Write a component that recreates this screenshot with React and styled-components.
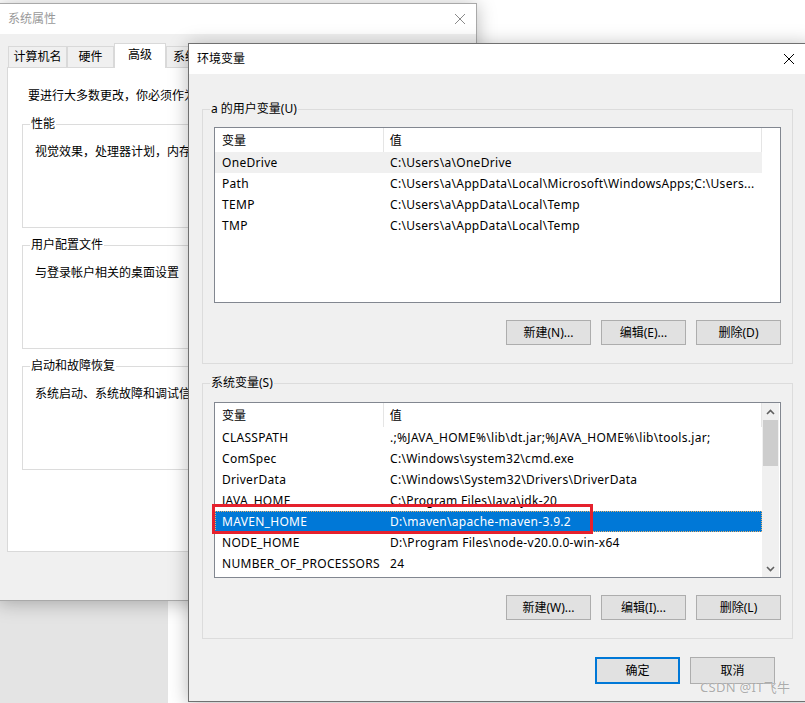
import React from 'react'
import styled, { createGlobalStyle } from 'styled-components'

const GlobalStyle = createGlobalStyle`
  html, body {
    margin: 0;
    padding: 0;
    background: #fff;
  }
  body {
    font-family: "Noto Sans", "Noto Sans CJK SC", sans-serif;
    font-size: 12px;
    color: #000;
    overflow: hidden;
  }
`

// 桌面（ウィンドウを自由に置くキャンバス）
const Desktop = styled.div`
  position: relative;
  width: 805px;
  height: 703px;
  overflow: hidden;
  background: #fff;
`

const BackWindow = styled.div`
  position: absolute;
  left: 0;
  top: 540px;
  width: 168px;
  height: 200px;
  background: #e4e4e4;
`

const Window = styled.div`
  position: absolute;
  left: ${p => p.$x}px;
  top: ${p => p.$y}px;
  width: ${p => p.$w}px;
  height: ${p => p.$h}px;
  box-sizing: border-box;
  border: 1px solid ${p => (p.$active ? '#707070' : '#a9a9a9')};
  background: #f0f0f0;
  box-shadow: 0 2px 18px rgba(0, 0, 0, 0.28);
  display: flex;
  flex-direction: column;
`

const TitleBar = styled.div`
  flex: none;
  height: 30px;
  background: #fff;
  display: flex;
  align-items: center;
  justify-content: space-between;
  padding-left: ${p => p.$pad}px;
  color: ${p => (p.$active ? '#000' : '#999')};
  line-height: 16px;
`

const CloseButton = styled.div`
  width: ${p => p.$w}px;
  height: 30px;
  display: flex;
  align-items: center;
  justify-content: center;
`

// ---- 系统属性 ----
const SysBody = styled.div`
  flex: 1;
  display: flex;
  flex-direction: column;
  padding: 9px 8px 48px 8px;
`

const TabStrip = styled.div`
  display: flex;
  align-items: flex-end;
  height: 24px;
  margin-left: 1px;
`

const Tab = styled.div`
  width: ${p => p.$w}px;
  height: ${p => (p.$selected ? 25 : 21)}px;
  box-sizing: border-box;
  border: 1px solid #d9d9d9;
  border-bottom: none;
  background: ${p => (p.$selected ? '#fff' : '#f0f0f0')};
  margin-bottom: ${p => (p.$selected ? -1 : 0)}px;
  position: relative;
  z-index: ${p => (p.$selected ? 1 : 0)};
  display: flex;
  align-items: center;
  justify-content: center;
  line-height: 16px;
  padding-bottom: ${p => (p.$selected ? 3 : 0)}px;
  white-space: nowrap;
  overflow: hidden;
`

const TabPanel = styled.div`
  flex: 1;
  border: 1px solid #d9d9d9;
  background: #fff;
  padding: 20px 0 0 14px;
  line-height: 16px;
  white-space: nowrap;
  overflow: hidden;
`

const Intro = styled.div`
  padding-left: 6px;
`

const SysGroup = styled.div`
  position: relative;
  width: 420px;
  height: 104px;
  box-sizing: border-box;
  border: 1px solid #dcdcdc;
  margin-top: ${p => p.$top}px;
  padding: 19px 0 0 12px;
`

const GroupLabel = styled.span`
  position: absolute;
  left: 7px;
  top: -9px;
  padding: 0 1px;
  line-height: 16px;
  background: ${p => p.$bg};
  white-space: nowrap;
`

// ---- 环境变量 ----
const EnvBody = styled.div`
  flex: 1;
  display: flex;
  flex-direction: column;
  padding: 35px 0 0 13px;
`

const EnvGroup = styled.div`
  position: relative;
  width: 591px;
  box-sizing: border-box;
  border: 1px solid #dcdcdc;
  margin-top: ${p => p.$top}px;
  padding: ${p => p.$padTop}px 11px 18px 11px;
  display: flex;
  flex-direction: column;
`

const ListBox = styled.div`
  width: 567px;
  height: 176px;
  box-sizing: border-box;
  border: 1px solid #828790;
  background: #fff;
  display: flex;
  overflow: hidden;
`

const ListMain = styled.div`
  width: 547px;
  flex: none;
  display: flex;
  flex-direction: column;
`

const HeaderRow = styled.div`
  display: flex;
  height: 24px;
  flex: none;
`

const HeaderCell = styled.div`
  width: ${p => p.$w}px;
  box-sizing: border-box;
  padding: 2px 0 0 ${p => p.$pad}px;
  border-right: 1px solid #e5e5e5;
  display: flex;
  align-items: center;
  line-height: 16px;
`

const Row = styled.div`
  display: flex;
  height: 21px;
  flex: none;
  box-sizing: border-box;
  padding-top: 1px;
  align-items: center;
  line-height: 16px;
  white-space: nowrap;
  background: ${p => (p.$selected ? '#0078d7' : p.$inactive ? '#f0f0f0' : 'transparent')};
  color: ${p => (p.$selected ? '#fff' : '#000')};
  outline: ${p => (p.$selected ? '1px dotted #e9b16a' : 'none')};
  outline-offset: -1px;
`

const Cell = styled.div`
  width: ${p => p.$w}px;
  flex: none;
  box-sizing: border-box;
  padding-left: 7px;
  letter-spacing: 0.3px;
  overflow: hidden;
`

const ScrollBar = styled.div`
  width: 17px;
  flex: none;
  background: #f0f0f0;
  display: flex;
  flex-direction: column;
`

const ScrollArrow = styled.div`
  height: 17px;
  flex: none;
  display: flex;
  align-items: center;
  justify-content: center;
`

const ScrollTrack = styled.div`
  flex: 1;
`

const ScrollThumb = styled.div`
  height: 46px;
  margin: 0 1px;
  background: #cdcdcd;
`

const ButtonRow = styled.div`
  display: flex;
  justify-content: flex-end;
  gap: 10px;
  box-sizing: border-box;
  margin-top: ${p => p.$top}px;
  padding-right: ${p => p.$right || 0}px;
`

const Button = styled.button`
  width: 85px;
  height: ${p => p.$h}px;
  box-sizing: border-box;
  padding: 0;
  background: #e1e1e1;
  border: ${p => (p.$default ? '2px solid #0078d7' : '1px solid #adadad')};
  font: inherit;
  line-height: 16px;
  color: #000;
`

const Footer = styled(ButtonRow)`
  width: 591px;
`

// 注釈（赤枠）と透かし
const Highlight = styled.div`
  position: absolute;
  left: 212px;
  top: 504px;
  width: 381px;
  height: 30px;
  box-sizing: border-box;
  border: 3px solid #e5212d;
`

const Watermark = styled.div`
  position: absolute;
  left: 700px;
  top: 679px;
  font-size: 13px;
  line-height: 16px;
  letter-spacing: 0.3px;
  color: rgba(150, 150, 150, 0.8);
  text-shadow: 0 0 1px #fff;
  white-space: nowrap;
`

const CloseIcon = ({ color }) => (
  <svg width="10" height="10" viewBox="0 0 10 10">
    <path d="M0 0L10 10M10 0L0 10" stroke={color} strokeWidth="1" fill="none" />
  </svg>
)

const Chevron = ({ down }) => (
  <svg width="9" height="6" viewBox="0 0 9 6">
    <polyline
      points={down ? '1,1 4.5,4.5 8,1' : '1,5 4.5,1.5 8,5'}
      stroke="#606060"
      strokeWidth="1.6"
      fill="none"
    />
  </svg>
)

const userVars = [
  ['OneDrive', 'C:\\Users\\a\\OneDrive'],
  ['Path', 'C:\\Users\\a\\AppData\\Local\\Microsoft\\WindowsApps;C:\\Users...'],
  ['TEMP', 'C:\\Users\\a\\AppData\\Local\\Temp'],
  ['TMP', 'C:\\Users\\a\\AppData\\Local\\Temp'],
]

const systemVars = [
  ['CLASSPATH', '.;%JAVA_HOME%\\lib\\dt.jar;%JAVA_HOME%\\lib\\tools.jar;'],
  ['ComSpec', 'C:\\Windows\\system32\\cmd.exe'],
  ['DriverData', 'C:\\Windows\\System32\\Drivers\\DriverData'],
  ['JAVA_HOME', 'C:\\Program Files\\Java\\jdk-20'],
  ['MAVEN_HOME', 'D:\\maven\\apache-maven-3.9.2'],
  ['NODE_HOME', 'D:\\Program Files\\node-v20.0.0-win-x64'],
  ['NUMBER_OF_PROCESSORS', '24'],
]

function VarList({ rows, selected, inactive, scroll }) {
  return (
    <ListBox>
      <ListMain>
        <HeaderRow>
          <HeaderCell $w={169} $pad={7}>变量</HeaderCell>
          <HeaderCell $w={379} $pad={6}>值</HeaderCell>
        </HeaderRow>
        {rows.map(([name, value]) => (
          <Row key={name} $selected={name === selected} $inactive={name === inactive}>
            <Cell $w={168}>{name}</Cell>
            <Cell $w={379}>{value}</Cell>
          </Row>
        ))}
      </ListMain>
      {scroll && (
        <ScrollBar>
          <ScrollArrow><Chevron /></ScrollArrow>
          <ScrollThumb />
          <ScrollTrack />
          <ScrollArrow><Chevron down /></ScrollArrow>
        </ScrollBar>
      )}
    </ListBox>
  )
}

function App() {
  return (
    <Desktop>
      <GlobalStyle />
      <BackWindow />

      {/* 系统属性（後ろのウィンドウ） */}
      <Window $x={-2} $y={3} $w={479} $h={598}>
        <TitleBar $pad={9}>
          系统属性
          <CloseButton $w={32}><CloseIcon color="#8a8a8a" /></CloseButton>
        </TitleBar>
        <SysBody>
          <TabStrip>
            <Tab $w={59}>计算机名</Tab>
            <Tab $w={47}>硬件</Tab>
            <Tab $w={52} $selected>高级</Tab>
            <Tab $w={62}>系统保护</Tab>
            <Tab $w={48}>远程</Tab>
          </TabStrip>
          <TabPanel>
            <Intro>要进行大多数更改，你必须作为管理员登录。</Intro>
            <SysGroup $top={20}>
              <GroupLabel $bg="#fff">性能</GroupLabel>
              视觉效果，处理器计划，内存使用，以及虚拟内存
            </SysGroup>
            <SysGroup $top={17}>
              <GroupLabel $bg="#fff">用户配置文件</GroupLabel>
              与登录帐户相关的桌面设置
            </SysGroup>
            <SysGroup $top={17}>
              <GroupLabel $bg="#fff">启动和故障恢复</GroupLabel>
              系统启动、系统故障和调试信息
            </SysGroup>
          </TabPanel>
        </SysBody>
      </Window>

      {/* 环境变量（前面のダイアログ） */}
      <Window $x={188} $y={43} $w={625} $h={659} $active>
        <TitleBar $pad={8} $active>
          环境变量
          <CloseButton $w={46}><CloseIcon color="#000" /></CloseButton>
        </TitleBar>
        <EnvBody>
          <EnvGroup $top={0} $padTop={17}>
            <GroupLabel $bg="#f0f0f0">a 的用户变量(U)</GroupLabel>
            <VarList rows={userVars} inactive="OneDrive" />
            <ButtonRow $top={17}>
              <Button $h={25}>新建(N)...</Button>
              <Button $h={25}>编辑(E)...</Button>
              <Button $h={25}>删除(D)</Button>
            </ButtonRow>
          </EnvGroup>
          <EnvGroup $top={19} $padTop={18}>
            <GroupLabel $bg="#f0f0f0">系统变量(S)</GroupLabel>
            <VarList rows={systemVars} selected="MAVEN_HOME" scroll />
            <ButtonRow $top={17}>
              <Button $h={25}>新建(W)...</Button>
              <Button $h={25}>编辑(I)...</Button>
              <Button $h={25}>删除(L)</Button>
            </ButtonRow>
          </EnvGroup>
          <Footer $top={18} $right={18}>
            <Button $h={27} $default>确定</Button>
            <Button $h={27}>取消</Button>
          </Footer>
        </EnvBody>
      </Window>

      <Highlight />
      <Watermark>CSDN @IT飞牛</Watermark>
    </Desktop>
  )
}

export default App
